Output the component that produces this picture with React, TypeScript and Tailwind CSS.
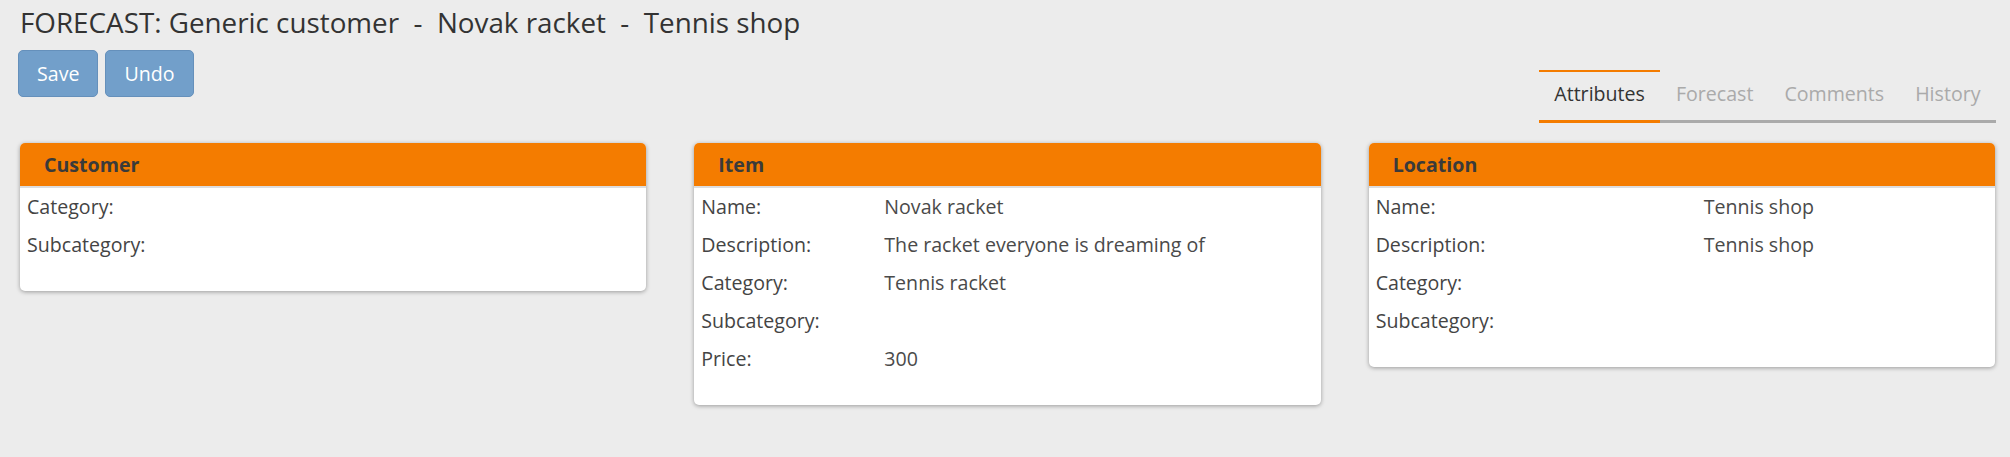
import React from 'react';

type Row = { label: string; value?: string };

const panels: { title: string; labelWidth: string; rows: Row[] }[] = [
  {
    title: 'Customer',
    labelWidth: 'w-[183px]',
    rows: [{ label: 'Category:' }, { label: 'Subcategory:' }],
  },
  {
    title: 'Item',
    labelWidth: 'w-[183px]',
    rows: [
      { label: 'Name:', value: 'Novak racket' },
      { label: 'Description:', value: 'The racket everyone is dreaming of' },
      { label: 'Category:', value: 'Tennis racket' },
      { label: 'Subcategory:' },
      { label: 'Price:', value: '300' },
    ],
  },
  {
    title: 'Location',
    labelWidth: 'w-[328px]',
    rows: [
      { label: 'Name:', value: 'Tennis shop' },
      { label: 'Description:', value: 'Tennis shop' },
      { label: 'Category:' },
      { label: 'Subcategory:' },
    ],
  },
];

const tabs = ['Attributes', 'Forecast', 'Comments', 'History'];

export default function App() {
  return (
    <div className="min-h-screen bg-[#ececec] font-['Open_Sans',sans-serif] text-[#444]">
      {/* title */}
      <h1 className="pl-[20px] pt-[7px] text-[27.8px] leading-[30px] text-[#333] whitespace-pre">
        FORECAST: Generic customer  -  Novak racket  -  Tennis shop
      </h1>

      {/* toolbar + tabs */}
      <div className="flex items-start justify-between pl-[18px] pr-[14px]">
        <div className="flex gap-[7px] mt-[13px]">
          <button className="h-[47px] px-[18px] rounded-[5px] bg-[#729fca] border border-[#6590bb] text-white text-[19.6px]">
            Save
          </button>
          <button className="h-[47px] px-[18px] rounded-[5px] bg-[#729fca] border border-[#6590bb] text-white text-[19.6px]">
            Undo
          </button>
        </div>

        <div className="flex mt-[33px] border-b-[3px] border-[#aaaaaa]">
          {tabs.map((t, i) => (
            <div
              key={t}
              className={`px-[15.5px] pt-[8px] pb-[12px] text-[19.6px] leading-[28px] border-t-2 ${
                i === 0
                  ? 'border-[#f47c00] text-[#333] border-b-[3px] -mb-[3px]'
                  : 'border-transparent text-[#aaaaaa]'
              }`}
            >
              {t}
            </div>
          ))}
        </div>
      </div>

      {/* panels */}
      <div className="grid grid-cols-3 items-start gap-[48px] pl-[20px] pr-[15px] mt-[20px]">
        {panels.map((p) => (
          <div
            key={p.title}
            className="bg-white rounded-[5px] overflow-hidden shadow-[0_1px_4px_rgba(0,0,0,0.35)]"
          >
            <div className="h-[43px] bg-[#f47c00] flex items-center pl-[24px] text-[19.6px] font-bold text-[#3a3a3a] border-b-2 border-[#dddddd] box-content">
              {p.title}
            </div>
            <div className="pb-[27px]">
              {p.rows.map((r) => (
                <div key={r.label} className="h-[38px] flex items-center pl-[7px] text-[19.6px]">
                  <span className={`${p.labelWidth} shrink-0 text-[#444]`}>{r.label}</span>
                  <span className="text-[#4a4a4a]">{r.value}</span>
                </div>
              ))}
            </div>
          </div>
        ))}
      </div>
    </div>
  );
}
